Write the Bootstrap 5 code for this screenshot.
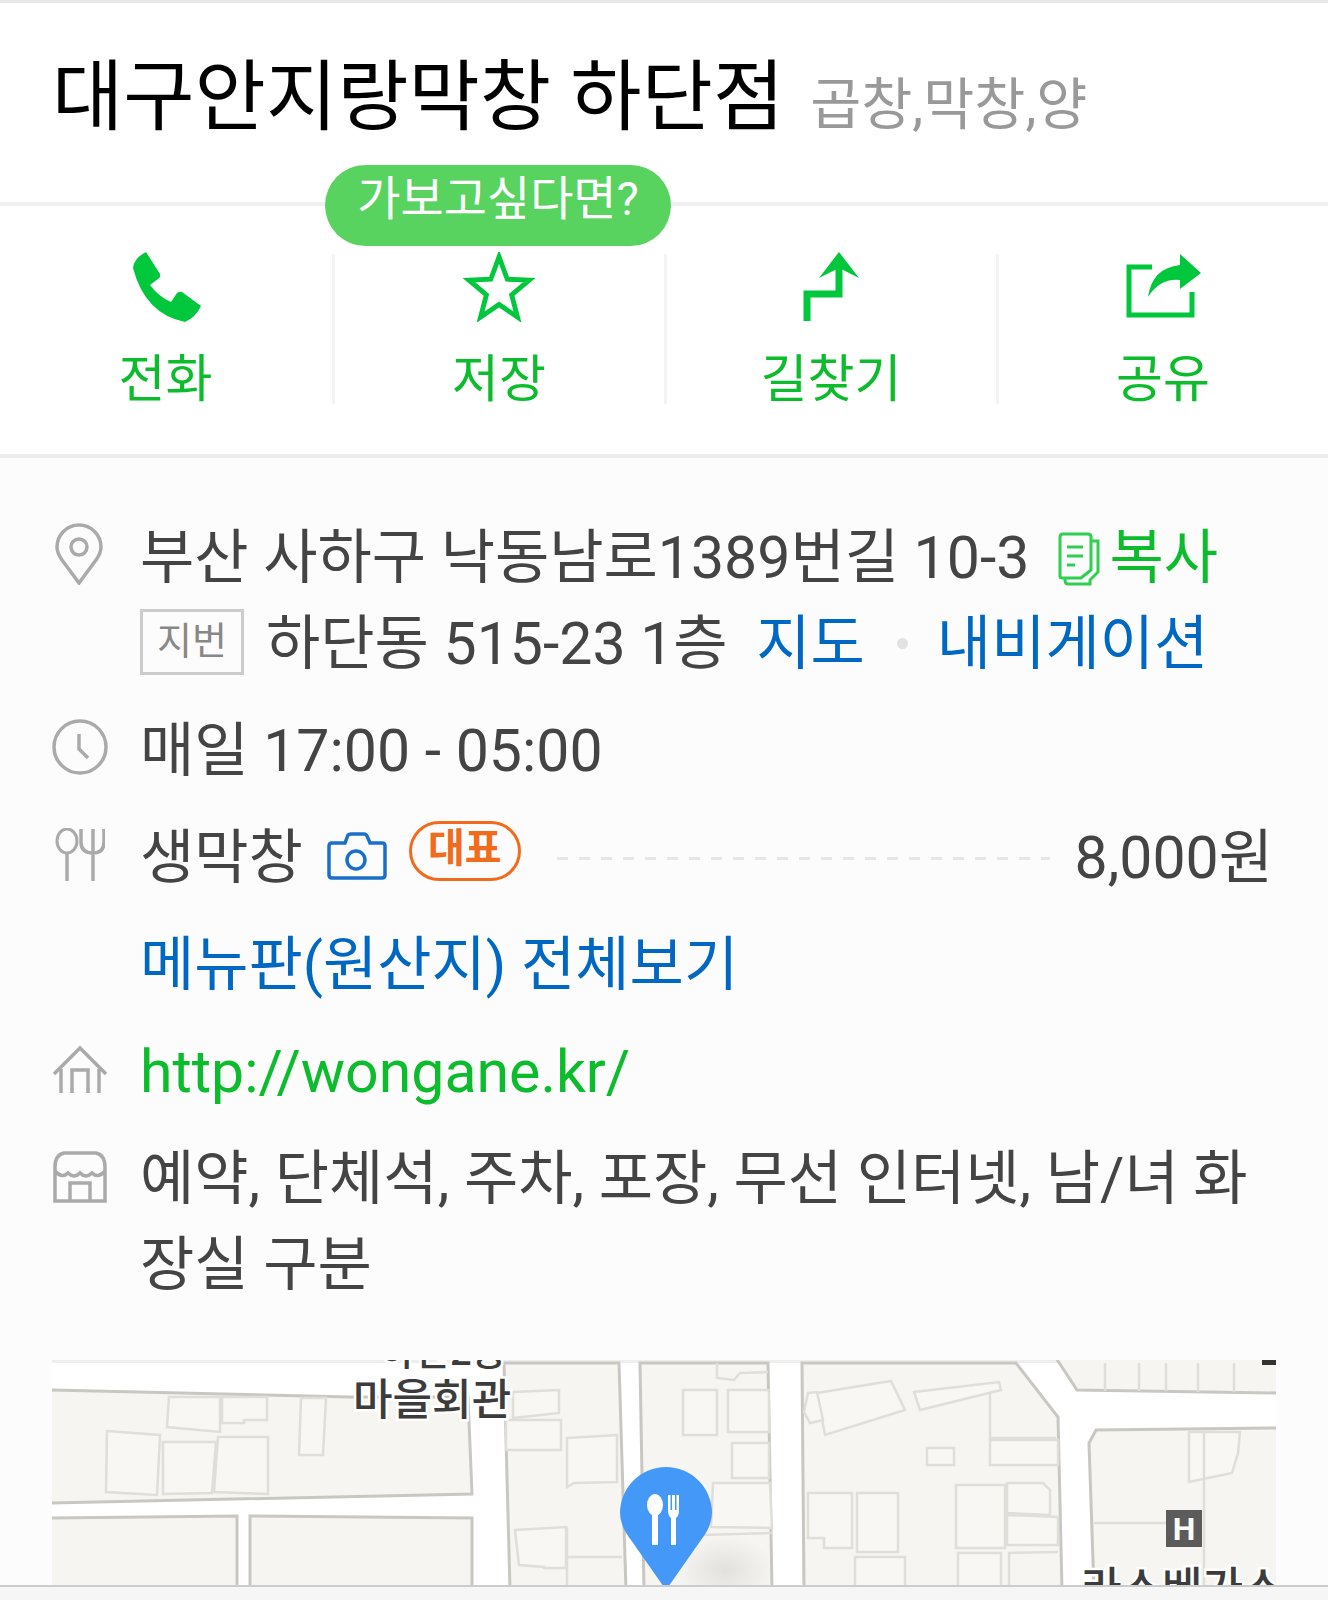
<!DOCTYPE html>
<html lang="ko">
<head>
  <meta charset="UTF-8">
  <title>대구안지랑막창 하단점</title>
  <link href="https://cdn.jsdelivr.net/npm/bootstrap@5.3.0/dist/css/bootstrap.min.css" rel="stylesheet">
  <style>
    body { background: #fcfcfc; font-family: Roboto, "Noto Sans CJK KR", sans-serif; color: #444; height: 1600px; overflow: hidden; }
    a { text-decoration: none; }
    .title-box { height: 206px; background: #fff; border-top: 3px solid #e8e8e8; border-bottom: 4px solid #f0f0f0; padding: 45px 0 0 52px; }
    .place-name { font-size: 77.5px; line-height: 100px; color: #000; font-weight: 400; margin: 0; }
    .place-cat { font-size: 55.5px; color: #999; margin-left: 26px; }
    .action-box { height: 252px; background: #fff; border-bottom: 4px solid #ececec; }
    .action-item { width: 332.5px; height: 150px; margin-top: 48px; }
    .action-item + .action-item { border-left: 3px solid #f3f3f3; }
    .action-item span { font-size: 51px; line-height: 60px; color: #0cbc2c; display: block; margin-top: 28px; margin-right: 1px; }
    .action-item svg { display: block; margin: -2px auto 0; height: 70px; }
    .tip-bubble { left: 325px; top: 165px; width: 346px; height: 81px; background: #58d35f; color: #fff; font-size: 47px; line-height: 68px; }
    .info-box { padding: 57px 52px 0 0; }
    .info-row { line-height: 86px; font-size: 59px; margin-bottom: 21px; }
    .info-icon { width: 140px; flex: none; position: relative; }
    .info-icon svg { position: absolute; }
    .ico-pin { left: 55px; top: 8px; }
    .ico-clock { left: 52px; top: 11px; }
    .ico-fork { left: 55px; top: 13px; }
    .ico-home { left: 52px; top: 17px; }
    .ico-store { left: 53px; top: 15px; }
    .ico-copy { vertical-align: -8px; margin: 0 8px 0 28px; }
    .copy-link { color: #0cbc2c; }
    .blue-link { color: #0068c3; }
    .map-link { margin-left: 14px; }
    .jibun-tag { display: inline-block; width: 104px; height: 66px; border: 3px solid #ccc; color: #888; font-size: 38px; line-height: 58px; text-align: center; vertical-align: 10px; margin-right: 22px; }
    .sep-dot { display: inline-block; width: 11px; height: 11px; border-radius: 50%; background: #e2e2e2; margin: 0 29px 0 32px; vertical-align: 15px; }
    .rep-tag { display: inline-block; width: 112px; height: 60px; border: 3px solid #f26a1b; color: #f26a1b; font-size: 40px; font-weight: 700; line-height: 50px; text-align: center; margin: 0 0 14px 22px; }
    .dash-line { height: 3px; margin: 0 24px 0 36px; background: repeating-linear-gradient(90deg, #e6e6e6 0 11px, transparent 11px 22px); }
    .price-val { margin-right: 3px; }
    .map-box { position: absolute; left: 52px; top: 1360px; width: 1224px; height: 225px; overflow: hidden; background: #fff; }
    .map-box svg { display: block; }
    .map-box text { font-family: Roboto, "Noto Sans CJK KR", sans-serif; }
    .bottom-strip { position: absolute; left: 0; right: 0; top: 1585px; height: 15px; background: #f6f6f6; border-top: 2px solid #ccc; }
  </style>
</head>
<body class="position-relative">
  <div class="title-box">
    <h1 class="place-name">대구안지랑막창 하단점<span class="place-cat">곱창,막창,양</span></h1>
  </div>

  <div class="action-box d-flex">
    <a class="action-item text-center" href="#">
      <svg width="70" height="70" viewBox="0 0 70 70"><path fill="#00c73c" d="M15 0 L29 22 Q30 25 27 27 L19 33 Q28 45 40 50 L46 41 Q48 39 51 40 L70 54 Q65 65 54 70 Q14 62 2 16 Q3 6 15 0Z"/></svg>
      <span>전화</span>
    </a>
    <a class="action-item text-center" href="#">
      <svg width="76" height="72" viewBox="0 0 76 72"><path fill="none" stroke="#00c73c" stroke-width="5" d="M37 5 L45.500 28 L68 29 L50 44 L56 67 L37 54 L18 67 L24 44 L6 29 L28.500 28Z"/></svg>
      <span>저장</span>
    </a>
    <a class="action-item text-center" href="#">
      <svg width="60" height="70" viewBox="0 0 60 70"><path fill="none" stroke="#00c73c" stroke-width="7" d="M5 69 V42 H37 V14"/><path fill="#00c73c" d="M37 0 L57 26 L37 16 L17 26Z"/></svg>
      <span>길찾기</span>
    </a>
    <a class="action-item text-center" href="#">
      <svg width="76" height="66" viewBox="0 0 76 66"><path fill="none" stroke="#00c73c" stroke-width="5" d="M26 13 H3 V61 H66 V38"/><path fill="#00c73c" d="M54 0 L75 19 L54 35 V26 Q34 24 22 43 Q26 14 54 11Z"/></svg>
      <span>공유</span>
    </a>
  </div>
  <div class="tip-bubble position-absolute rounded-pill text-center">가보고싶다면?</div>

  <div class="info-box">
    <div class="info-row d-flex">
      <div class="info-icon">
        <svg class="ico-pin" width="48" height="62" viewBox="0 0 48 62"><path fill="none" stroke="#aaa" stroke-width="3.500" d="M24 60 L7 37 Q2 30 2 24 A22 22 0 0 1 46 24 Q46 30 41 37Z"/><circle cx="24" cy="24" r="8" fill="none" stroke="#aaa" stroke-width="3.500"/></svg>
      </div>
      <div class="flex-fill">
        <div>부산 사하구 낙동남로1389번길 10-3<a class="copy-link" href="#"><svg class="ico-copy" width="44" height="54" viewBox="0 0 44 54"><path fill="none" stroke="#2fcf50" stroke-width="3" d="M3 5 Q3 2 6 2 H31 Q34 2 34 5 V9 H41 V40 L33 48 V52 H11 Q8 52 8 48 V46 H5 Q3 46 3 44Z M34 9 V38 L24 46 H8"/><path stroke="#2fcf50" stroke-width="3" d="M10 15 H26 M10 24 H26 M10 33 H18"/></svg>복사</a></div>
        <div><span class="jibun-tag">지번</span>하단동 515-23 1층 <a class="blue-link map-link" href="#">지도</a><i class="sep-dot"></i><a class="blue-link" href="#">내비게이션</a></div>
      </div>
    </div>
    <div class="info-row d-flex">
      <div class="info-icon">
        <svg class="ico-clock" width="56" height="56" viewBox="0 0 56 56"><circle cx="28" cy="28" r="26" fill="none" stroke="#aaa" stroke-width="3.500"/><path fill="none" stroke="#aaa" stroke-width="3.500" d="M27 15 V30 L36 39"/></svg>
      </div>
      <div>매일 17:00 - 05:00</div>
    </div>
    <div class="info-row d-flex align-items-center">
      <div class="info-icon align-self-stretch">
        <svg class="ico-fork" width="50" height="54" viewBox="0 0 50 54"><ellipse cx="12" cy="13" rx="10" ry="12" fill="none" stroke="#aaa" stroke-width="3"/><path fill="none" stroke="#aaa" stroke-width="3.500" d="M12 25 V53 M38 25 V53 M26 1 V14 Q26 25 38 25 Q49 25 49 14 V1 M38 1 V25"/></svg>
      </div>
      <div class="d-flex align-items-center">
        <span>생막창</span>
        <svg class="ms-4 mb-1" width="60" height="48" viewBox="0 0 60 48"><path fill="none" stroke="#1a6fc9" stroke-width="3.500" d="M2 14 Q2 11 5 11 H18 L21 3 Q22 2 24 2 H37 Q39 2 40 4 L43 11 H55 Q58 11 58 14 V43 Q58 46 55 46 H5 Q2 46 2 43Z"/><circle cx="29" cy="28" r="9" fill="none" stroke="#1a6fc9" stroke-width="3.500"/></svg>
        <span class="rep-tag rounded-pill">대표</span>
      </div>
      <div class="dash-line flex-fill"></div>
      <div class="price-val">8,000원</div>
    </div>
    <div class="info-row d-flex">
      <div class="info-icon"></div>
      <a class="blue-link" href="#">메뉴판(원산지) 전체보기</a>
    </div>
    <div class="info-row d-flex">
      <div class="info-icon">
        <svg class="ico-home" width="56" height="48" viewBox="0 0 56 48"><path fill="none" stroke="#aaa" stroke-width="3.500" d="M2 28 L28 2 L54 28 M9 23 V47 M47 23 V47 M20 47 V24 H36 V47"/></svg>
      </div>
      <a class="copy-link" href="#">http://wongane.kr/</a>
    </div>
    <div class="info-row d-flex">
      <div class="info-icon">
        <svg class="ico-store" width="54" height="52" viewBox="0 0 54 52"><path fill="none" stroke="#aaa" stroke-width="3.500" d="M11 2 H43 Q52 4 52 16 V50 H2 V16 Q2 4 11 2Z M2 20 Q9 28 15 22 Q21 28 27 22 Q33 28 39 22 Q45 28 52 20 M17 50 V32 H37 V50"/></svg>
      </div>
      <div class="flex-fill">예약, 단체석, 주차, 포장, 무선 인터넷, 남/녀 화장실 구분</div>
    </div>
  </div>

  <div class="map-box">
    <svg width="1224" height="225" viewBox="52 1360 1224 225">
      <defs>
        <radialGradient id="pinShade"><stop offset="0" stop-color="#bbb" stop-opacity=".35"/><stop offset="1" stop-color="#bbb" stop-opacity="0"/></radialGradient>
      </defs>
      <rect x="52" y="1360" width="1224" height="3" fill="#eee"/>
      <!-- blocks -->
      <g fill="#f7f5f1" stroke="#c9c7c2" stroke-width="3">
        <path d="M50 1390 L350 1397 L468 1397 L472 1494 L50 1503Z"/>
        <path d="M50 1518 L237 1516 V1590 H50Z"/>
        <path d="M250 1516 L472 1518 V1590 H250Z"/>
        <path d="M504 1363 H619 L626 1590 H510Z"/>
        <path d="M640 1363 H768 L772 1590 H644Z"/>
        <path d="M802 1363 H1016 L1058 1417 L1062 1590 H804Z"/>
        <path d="M1056 1358 L1077 1390 L1280 1393 V1358Z"/>
        <path d="M1280 1428 L1096 1430 L1089 1443 L1094 1590 H1280Z"/>
      </g>
      <!-- buildings -->
      <g fill="#f8f7f3" stroke="#e0ded9" stroke-width="2.500">
        <path d="M169 1397 H220 V1432 L167 1427Z"/>
        <path d="M222 1397 H267 V1420 H244 V1423 H222Z"/>
        <path d="M301 1398 H326 L323 1455 H299Z"/>
        <path d="M107 1431 L160 1435 L157 1495 L106 1492Z"/>
        <path d="M163 1442 H216 L212 1493 L163 1494Z"/>
        <path d="M218 1437 H268 V1494 L214 1492Z"/>
        <path d="M513 1392 L559 1390 V1413 L513 1418Z"/>
        <path d="M506 1420 H561 V1450 H506Z"/>
        <path d="M567 1438 L617 1435 V1482 L574 1483 L567 1487Z"/>
        <path d="M515 1530 L566 1527 V1568 H544 V1567 L519 1565Z"/>
        <path d="M567 1557 H622 M567 1527 V1590" fill="none"/>
        <path d="M717 1363 V1378 L734 1380 L740 1373 L768 1372" fill="none"/>
        <path d="M683 1390 H717 V1435 H683Z"/>
        <path d="M728 1390 H769 V1432 H728Z"/>
        <path d="M732 1443 H769 V1478 H732Z"/>
        <path d="M713 1483 H770 L772 1528 L711 1527Z"/>
        <path d="M700 1535 L773 1533" fill="none"/>
        <path d="M817 1393 L891 1381 L905 1410 L825 1435Z"/>
        <path d="M808 1393 L817 1392 L823 1420 L810 1423 L804 1412Z"/>
        <path d="M914 1392 L999 1382 L1001 1390 L920 1410Z"/>
        <path d="M990 1393 V1438 H1056" fill="none"/>
        <path d="M990 1440 H1058 V1465 H990Z"/>
        <path d="M927 1448 H954 V1465 H927Z"/>
        <path d="M808 1493 H852 V1548 H824 V1538 H808Z"/>
        <path d="M857 1493 H898 V1552 H857Z"/>
        <path d="M855 1557 H905 V1590 H855Z"/>
        <path d="M956 1485 H1005 V1548 H956Z"/>
        <path d="M1007 1483 H1043 L1050 1490 V1515 L1007 1513Z"/>
        <path d="M1007 1515 L1058 1517 V1545 H1007Z"/>
        <path d="M958 1553 H1001 V1590 H958Z"/>
        <path d="M1009 1590 V1553 L1058 1552" fill="none"/>
        <path d="M1105 1363 V1391 M1139 1363 V1391 M1166 1363 V1391 M1198 1363 V1392 M1234 1363 V1392" fill="none"/>
        <path d="M1189 1432 H1240 L1238 1453 L1232 1473 L1189 1482Z"/>
        <path d="M1204 1432 V1590 M1094 1523 H1166" fill="none"/>
      </g>
      <!-- labels -->
      <g paint-order="stroke" stroke="#fff" stroke-width="5" fill="#3c3c3c" font-size="43" font-weight="500">
        <text x="380" y="1365" font-size="38">하단2동</text>
        <text x="353" y="1415">마을회관</text>
        <text x="1081" y="1604" font-size="44">라스베가스</text>
      </g>
      <rect x="1262" y="1360" width="14" height="5" fill="#333"/>
      <rect x="1166" y="1510" width="36" height="37" fill="#5b5b5b"/>
      <text x="1184" y="1540" fill="#fff" font-size="32" font-weight="700" text-anchor="middle">H</text>
      <!-- pin -->
      <ellipse cx="725" cy="1570" rx="50" ry="34" fill="url(#pinShade)"/>
      <path fill="#4398f8" d="M666 1590 L631 1540 Q620 1526 620 1513 A46 46 0 0 1 712 1513 Q712 1526 701 1540Z"/>
      <g fill="#fff">
        <ellipse cx="655" cy="1505" rx="8" ry="11"/>
        <rect x="652" y="1510" width="6" height="35"/>
        <path d="M668 1495 H670.500 V1510 H672 V1495 H675 V1510 H676.500 V1495 H679 V1510 Q679 1516 676 1518 V1545 H671 V1518 Q668 1516 668 1510Z"/>
      </g>
    </svg>
  </div>
  <div class="bottom-strip"></div>
</body>
</html>
